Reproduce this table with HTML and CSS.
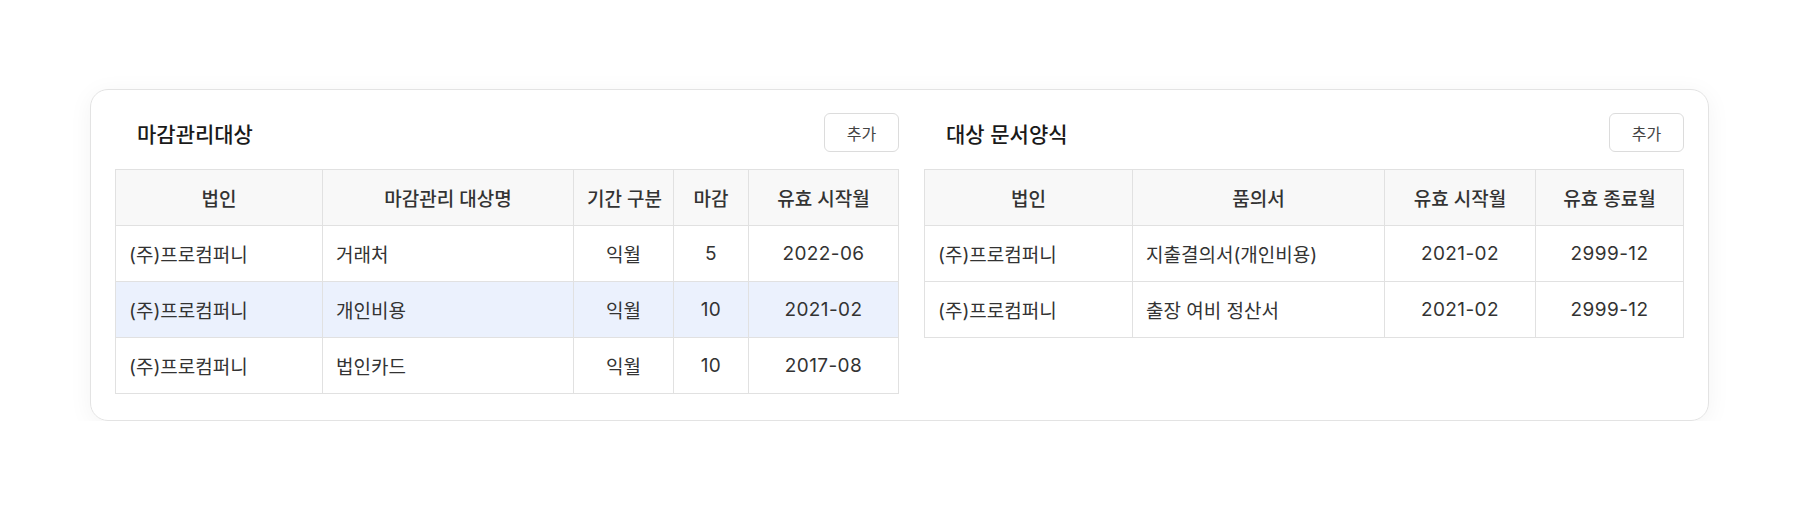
FILE: index.html
```html
<!DOCTYPE html>
<html lang="ko">
<head>
<meta charset="utf-8">
<link rel="stylesheet" href="styles.css">
</head>
<body>
<div class="card">
  <section class="panel panel-left">
    <div class="panel-head">
      <h2 class="panel-title">마감관리대상</h2>
      <button class="btn">추가</button>
    </div>
    <table class="grid">
      <colgroup>
        <col class="c207"><col class="c251"><col class="c100"><col class="c75"><col>
      </colgroup>
      <thead>
        <tr><th>법인</th><th>마감관리 대상명</th><th>기간 구분</th><th>마감</th><th>유효 시작월</th></tr>
      </thead>
      <tbody>
        <tr><td>(주)프로컴퍼니</td><td>거래처</td><td class="ct">익월</td><td class="ct num">5</td><td class="ct num">2022-06</td></tr>
        <tr class="selected"><td>(주)프로컴퍼니</td><td>개인비용</td><td class="ct">익월</td><td class="ct num">10</td><td class="ct num">2021-02</td></tr>
        <tr><td>(주)프로컴퍼니</td><td>법인카드</td><td class="ct">익월</td><td class="ct num">10</td><td class="ct num">2017-08</td></tr>
      </tbody>
    </table>
  </section>
  <section class="panel panel-right">
    <div class="panel-head">
      <h2 class="panel-title">대상 문서양식</h2>
      <button class="btn">추가</button>
    </div>
    <table class="grid">
      <colgroup>
        <col class="c208"><col class="c252"><col class="c151"><col>
      </colgroup>
      <thead>
        <tr><th>법인</th><th>품의서</th><th>유효 시작월</th><th>유효 종료월</th></tr>
      </thead>
      <tbody>
        <tr><td>(주)프로컴퍼니</td><td>지출결의서(개인비용)</td><td class="ct num">2021-02</td><td class="ct num">2999-12</td></tr>
        <tr><td>(주)프로컴퍼니</td><td>출장 여비 정산서</td><td class="ct num">2021-02</td><td class="ct num">2999-12</td></tr>
      </tbody>
    </table>
  </section>
</div>
</body>
</html>
```
FILE: styles.css
```css
* { box-sizing: border-box; }
html, body { margin: 0; padding: 0; background: #fff; }
body {
  font-family: "Inter", "Noto Sans CJK KR", sans-serif;
  color: #333;
  padding: 89px 0 0 90px;
}
.card {
  width: 1619px;
  height: 332px;
  border: 1px solid #e3e3e3;
  border-radius: 18px;
  box-shadow: 0 4px 24px rgba(0,0,0,0.05);
  padding: 23px 24px 0 24px;
  display: grid;
  grid-template-columns: 784px 760px;
  column-gap: 25px;
  align-items: start;
}
.panel-head {
  display: flex;
  justify-content: space-between;
  align-items: center;
  height: 39px;
  margin-bottom: 17px;
}
.panel-title {
  margin: 0;
  padding-left: 22px;
  font-size: 21px;
  font-weight: 500;
  color: #1a1a1a;
}
.btn {
  width: 75px;
  height: 39px;
  border: 1px solid #dcdcdc;
  border-radius: 6px;
  background: #fff;
  font-family: inherit;
  font-size: 16px;
  color: #444;
  padding: 0;
}
.grid {
  width: 100%;
  border-collapse: collapse;
  table-layout: fixed;
  font-size: 19px;
}
.c207 { width: 207px; }
.c251 { width: 251px; }
.c100 { width: 100px; }
.c75 { width: 75px; }
.c208 { width: 208px; }
.c252 { width: 252px; }
.c151 { width: 151px; }
.grid th, .grid td {
  border: 1px solid #e1e1e1;
  height: 56px;
  padding: 0 13px;
  white-space: nowrap;
}
.grid th {
  background: #f8f8f8;
  font-weight: 500;
  color: #333;
  text-align: center;
}
.grid td { font-weight: 400; color: #333; text-align: left; }
.grid td.ct { text-align: center; }
.grid td.num { letter-spacing: 0.4px; }
.grid tr.selected td { background: #ebf1fd; }
```
